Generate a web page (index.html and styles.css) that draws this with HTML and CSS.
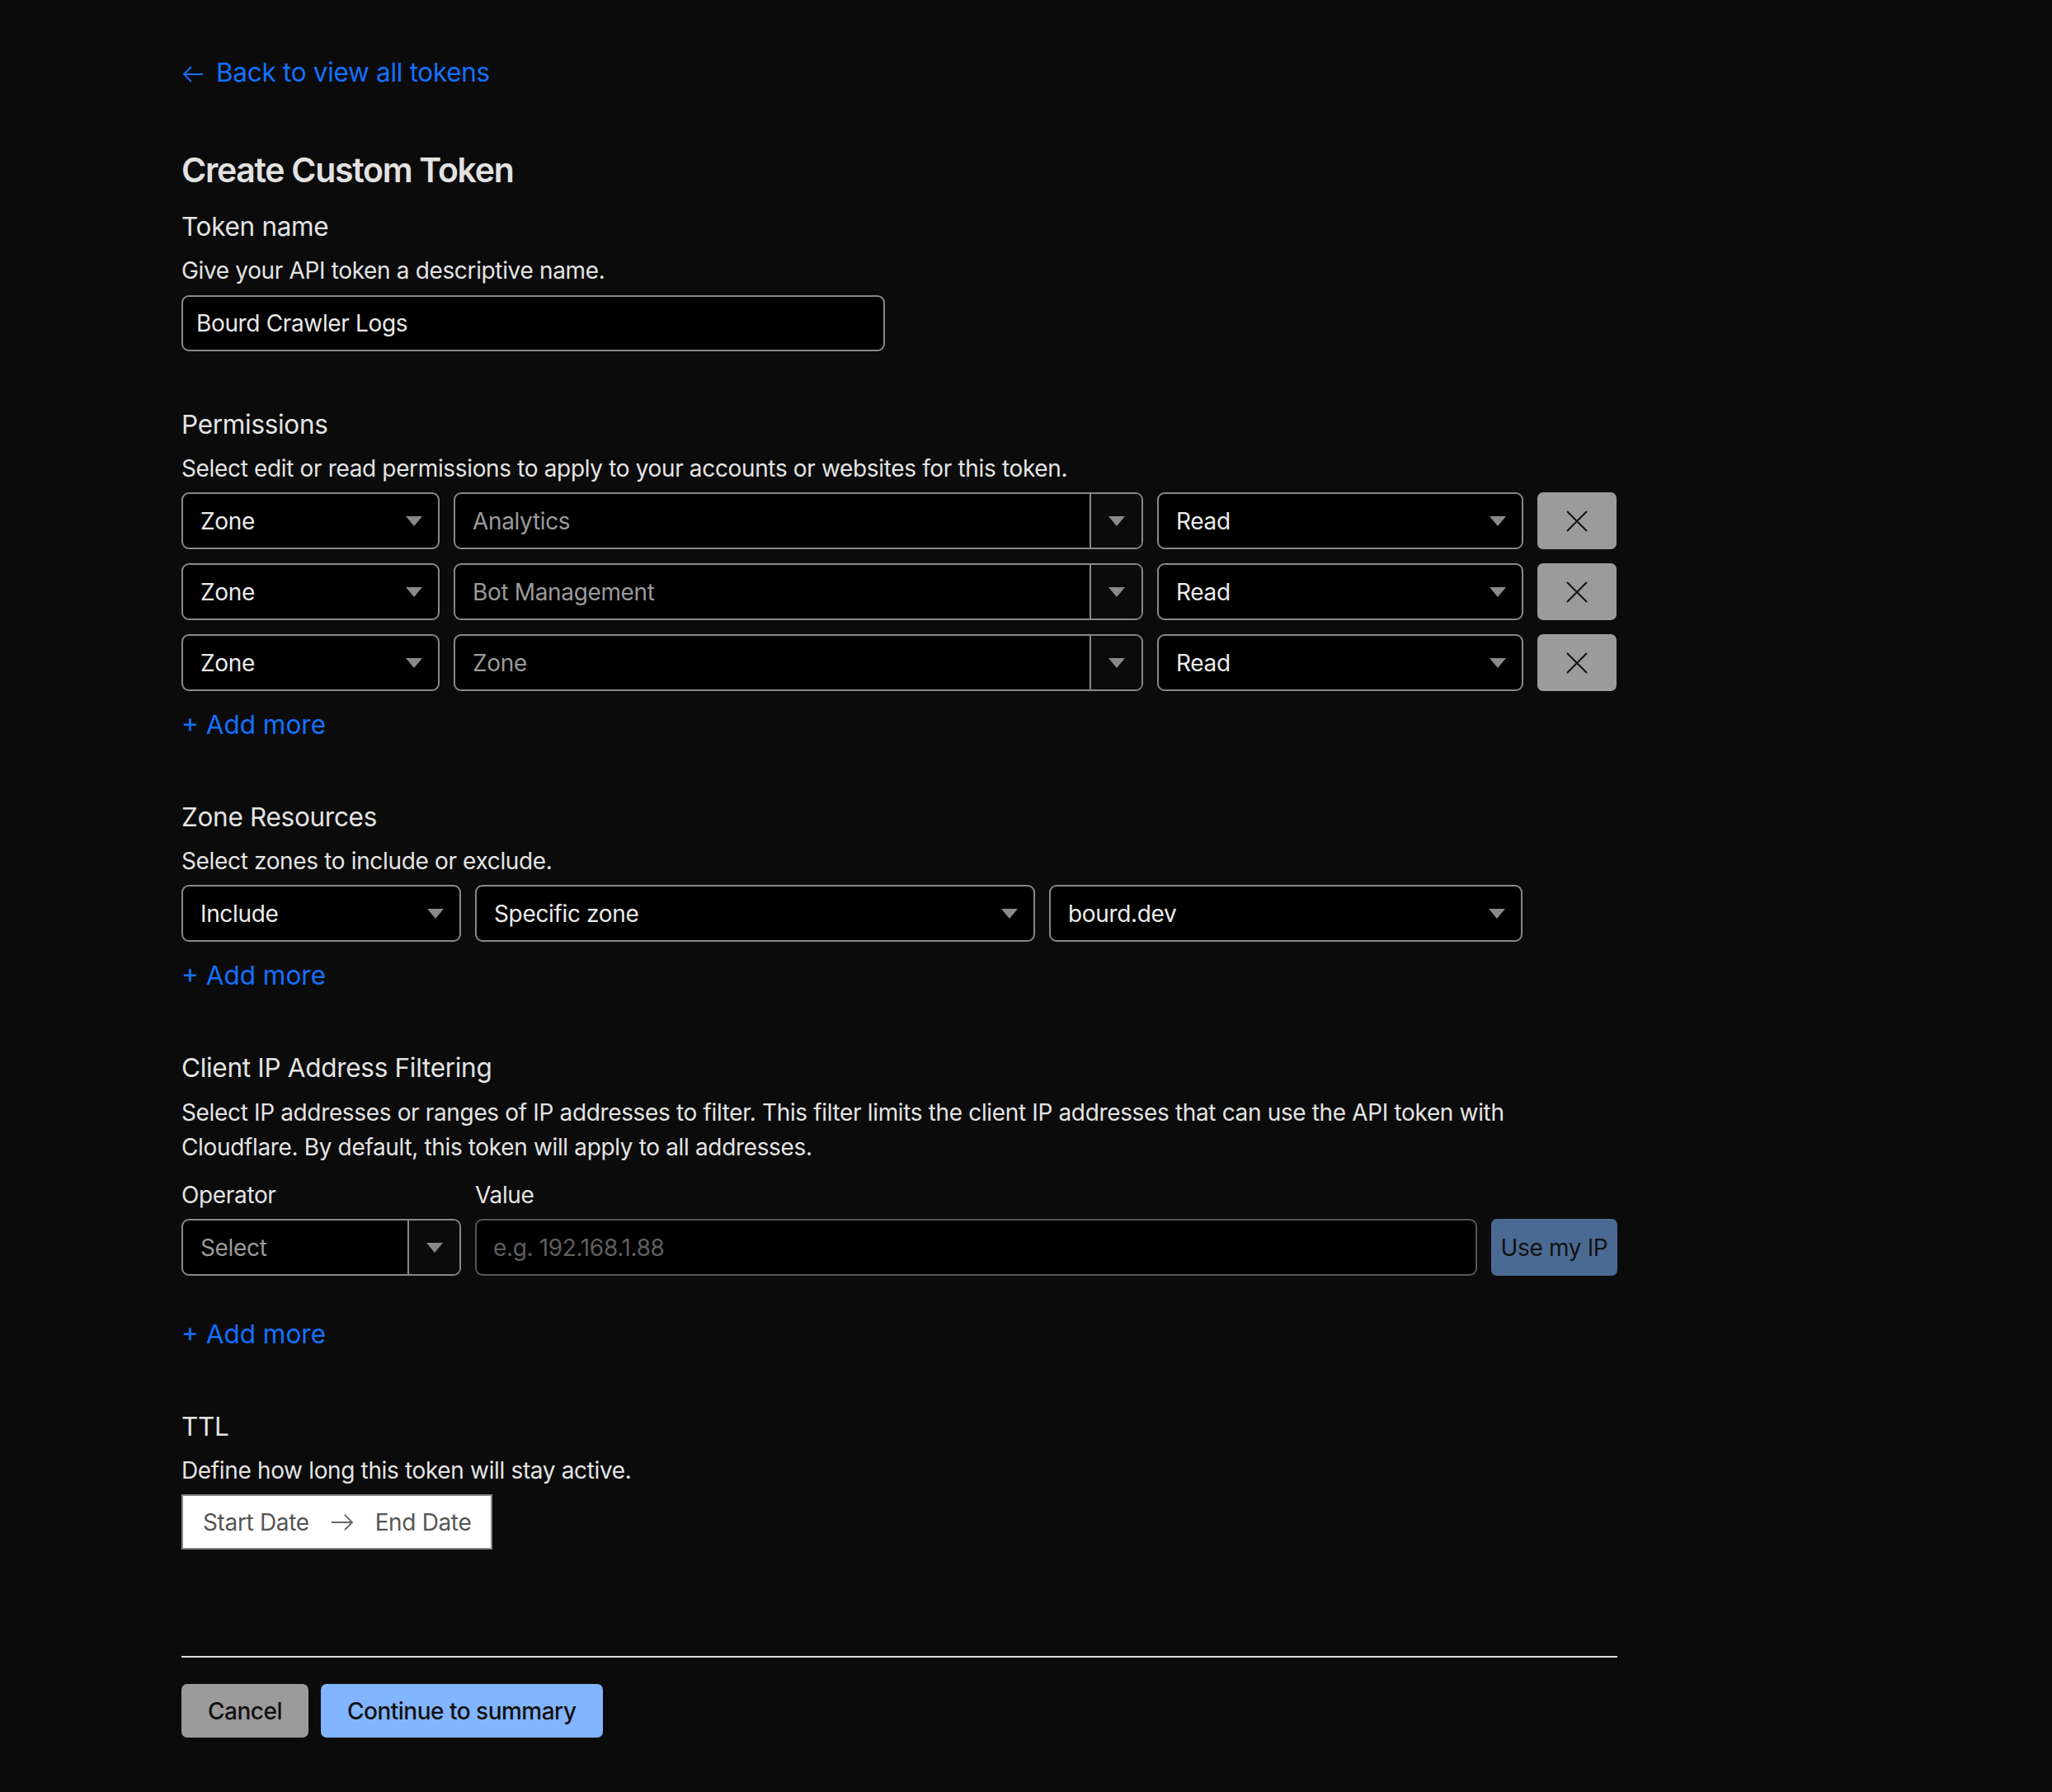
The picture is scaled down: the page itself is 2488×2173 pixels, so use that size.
FILE: index.html
```html
<!DOCTYPE html>
<html lang="en">
<head>
  <meta charset="UTF-8" />
  <title>Create Custom Token</title>
  <link rel="stylesheet" href="styles.css">
</head>
<body>
  <main class="page">
    <a class="back-link" href="#">
      <svg class="back-arrow" width="28" height="24" viewBox="0 0 28 24">
        <path d="M26 12H3M12 3L3 12l9 9" fill="none" stroke="currentColor" stroke-width="1.8" />
      </svg>
      Back to view all tokens
    </a>

    <h1 class="page-title">Create Custom Token</h1>

    <!-- Token name -->
    <section class="group group-first">
      <h2>Token name</h2>
      <p class="hint">Give your API token a descriptive name.</p>
      <input class="text-input name-input" type="text" value="Bourd Crawler Logs">
    </section>

    <!-- Permissions -->
    <section class="group group-perms">
      <h2>Permissions</h2>
      <p class="hint">Select edit or read permissions to apply to your accounts or websites for this token.</p>

      <div class="perm-rows">
        <div class="perm-row">
          <div class="select"><span>Zone</span><i class="caret"></i></div>
          <div class="combo"><span class="muted">Analytics</span><div class="combo-btn"><i class="caret"></i></div></div>
          <div class="select"><span>Read</span><i class="caret"></i></div>
          <button class="remove-btn" type="button">
            <svg width="28" height="26" viewBox="0 0 28 26"><path d="M2 1l24 24M26 1L2 25" stroke="#111" stroke-width="2" fill="none" /></svg>
          </button>
        </div>
        <div class="perm-row">
          <div class="select"><span>Zone</span><i class="caret"></i></div>
          <div class="combo"><span class="muted">Bot Management</span><div class="combo-btn"><i class="caret"></i></div></div>
          <div class="select"><span>Read</span><i class="caret"></i></div>
          <button class="remove-btn" type="button">
            <svg width="28" height="26" viewBox="0 0 28 26"><path d="M2 1l24 24M26 1L2 25" stroke="#111" stroke-width="2" fill="none" /></svg>
          </button>
        </div>
        <div class="perm-row">
          <div class="select"><span>Zone</span><i class="caret"></i></div>
          <div class="combo"><span class="muted">Zone</span><div class="combo-btn"><i class="caret"></i></div></div>
          <div class="select"><span>Read</span><i class="caret"></i></div>
          <button class="remove-btn" type="button">
            <svg width="28" height="26" viewBox="0 0 28 26"><path d="M2 1l24 24M26 1L2 25" stroke="#111" stroke-width="2" fill="none" /></svg>
          </button>
        </div>
      </div>

      <a class="add-more" href="#">+ Add more</a>
    </section>

    <!-- Zone resources -->
    <section class="group">
      <h2>Zone Resources</h2>
      <p class="hint">Select zones to include or exclude.</p>

      <div class="zone-row">
        <div class="select"><span>Include</span><i class="caret"></i></div>
        <div class="select"><span>Specific zone</span><i class="caret"></i></div>
        <div class="select"><span>bourd.dev</span><i class="caret"></i></div>
      </div>

      <a class="add-more" href="#">+ Add more</a>
    </section>

    <!-- Client IP filtering -->
    <section class="group">
      <h2>Client IP Address Filtering</h2>
      <p class="hint hint-wide">Select IP addresses or ranges of IP addresses to filter. This filter limits the client IP addresses that can use the API token with Cloudflare. By default, this token will apply to all addresses.</p>

      <div class="ip-grid">
        <label class="field-label">Operator</label>
        <label class="field-label">Value</label>
        <span></span>
        <div class="combo"><span class="muted">Select</span><div class="combo-btn"><i class="caret"></i></div></div>
        <input class="text-input value-input" type="text" placeholder="e.g. 192.168.1.88">
        <button class="ip-btn" type="button">Use my IP</button>
      </div>

      <a class="add-more add-more-far" href="#">+ Add more</a>
    </section>

    <!-- TTL -->
    <section class="group">
      <h2>TTL</h2>
      <p class="hint">Define how long this token will stay active.</p>
      <div class="date-range">
        <span>Start Date</span>
        <svg width="28" height="22" viewBox="0 0 28 22"><path d="M1 11h25M17 2l9 9-9 9" fill="none" stroke="#666" stroke-width="1.8" /></svg>
        <span>End Date</span>
      </div>
    </section>

    <div class="form-footer">
      <button class="btn btn-cancel" type="button">Cancel</button>
      <button class="btn btn-primary" type="button">Continue to summary</button>
    </div>
  </main>
</body>
</html>
```

FILE: styles.css
```css
/* Basic Reset */
* {
  margin: 0;
  padding: 0;
  box-sizing: border-box;
}

body {
  background: #0b0b0b;
  color: #e4e4e4;
  font-family: Inter, "Noto Sans", sans-serif;
  font-size: 28px;
  line-height: 42px;
  letter-spacing: -0.35px;
}

.page {
  padding: 67px 0 65px 220px;
  width: 1961px;
}

a {
  text-decoration: none;
}

.back-link {
  display: flex;
  align-items: center;
  gap: 14px;
  color: #1571ff;
  font-size: 31.5px;
  line-height: 42px;
  letter-spacing: -0.3px;
}

.back-arrow {
  margin-top: 4px;
}

.page-title {
  margin-top: 69px;
  font-size: 41px;
  line-height: 56px;
  font-weight: 600;
  letter-spacing: -1.3px;
  color: #e2e2e2;
}

h2 {
  font-size: 31.5px;
  line-height: 42px;
  font-weight: 400;
  letter-spacing: -0.3px;
  color: #e4e4e4;
}

.group {
  margin-top: 70px;
}

.group-first {
  margin-top: 20px;
}

.group-perms {
  margin-top: 68px;
}

.hint {
  margin-top: 11px;
}

.hint-wide {
  margin-top: 12px;
  max-width: 1700px;
}

/* Inputs and selects */
.text-input {
  display: block;
  height: 68px;
  margin-top: 9px;
  padding: 0 16px;
  background: #000;
  border: 2px solid #888;
  border-radius: 9px;
  color: #e8e8e8;
  font-family: inherit;
  font-size: 28px;
  letter-spacing: -0.35px;
  outline: none;
}

.name-input {
  width: 853px;
}

.text-input::placeholder {
  color: #5f5f5f;
}

.select {
  display: flex;
  align-items: center;
  justify-content: space-between;
  height: 69px;
  padding: 0 19px 0 21px;
  background: #000;
  border: 2px solid #888;
  border-radius: 9px;
  color: #ececec;
}

.combo {
  display: flex;
  align-items: center;
  height: 69px;
  padding-left: 21px;
  background: #000;
  border: 2px solid #888;
  border-radius: 9px;
  overflow: hidden;
}

.combo span {
  flex: 1;
}

.combo-btn {
  display: flex;
  align-items: center;
  justify-content: center;
  width: 63px;
  height: 100%;
  border-left: 2px solid #888;
  background: #0b0b0b;
}

.muted {
  color: #9a9a9a;
}

.caret {
  display: block;
  width: 0;
  height: 0;
  border-left: 10px solid transparent;
  border-right: 10px solid transparent;
  border-top: 12px solid #8a8a8a;
}

/* Permission rows */
.perm-rows {
  display: flex;
  flex-direction: column;
  gap: 17px;
  margin-top: 8px;
}

.perm-row {
  display: grid;
  grid-template-columns: 313px 836px 444px 96px;
  gap: 17px;
}

.remove-btn {
  display: flex;
  align-items: center;
  justify-content: center;
  height: 69px;
  background: #9b9b9b;
  border: none;
  border-radius: 7px;
}

.add-more {
  display: block;
  margin-top: 20px;
  color: #1571ff;
  font-size: 31.5px;
  line-height: 42px;
  letter-spacing: 0;
}

.add-more-far {
  margin-top: 50px;
}

/* Zone resources */
.zone-row {
  display: grid;
  grid-template-columns: 339px 679px 574px;
  gap: 17px;
  margin-top: 8px;
}

/* IP filtering */
.ip-grid {
  display: grid;
  grid-template-columns: 339px 1215px 153px;
  column-gap: 17px;
  row-gap: 8px;
  margin-top: 16px;
}

.field-label {
  color: #e4e4e4;
}

.value-input {
  margin-top: 0;
  height: 69px;
  border-color: #555;
  padding: 0 20px;
}

.ip-btn {
  height: 69px;
  background: #4b6a93;
  border: none;
  border-radius: 7px;
  color: #111;
  font-family: inherit;
  font-size: 28px;
  letter-spacing: -0.35px;
}

/* TTL */
.date-range {
  display: inline-flex;
  align-items: center;
  gap: 26px;
  height: 67px;
  margin-top: 8px;
  padding: 0 24px;
  background: #fff;
  border: 2px solid #888;
  color: #555;
}

/* Footer */
.form-footer {
  display: flex;
  gap: 15px;
  margin-top: 129px;
  padding-top: 32px;
  border-top: 2px solid #dcdcdc;
}

.btn {
  height: 65px;
  padding: 0 32px;
  border: none;
  border-radius: 7px;
  color: #111;
  font-family: inherit;
  font-size: 28px;
  font-weight: 500;
  letter-spacing: -0.5px;
}

.btn-cancel {
  background: #9b9b9b;
}

.btn-primary {
  background: #82b5ff;
}
```
